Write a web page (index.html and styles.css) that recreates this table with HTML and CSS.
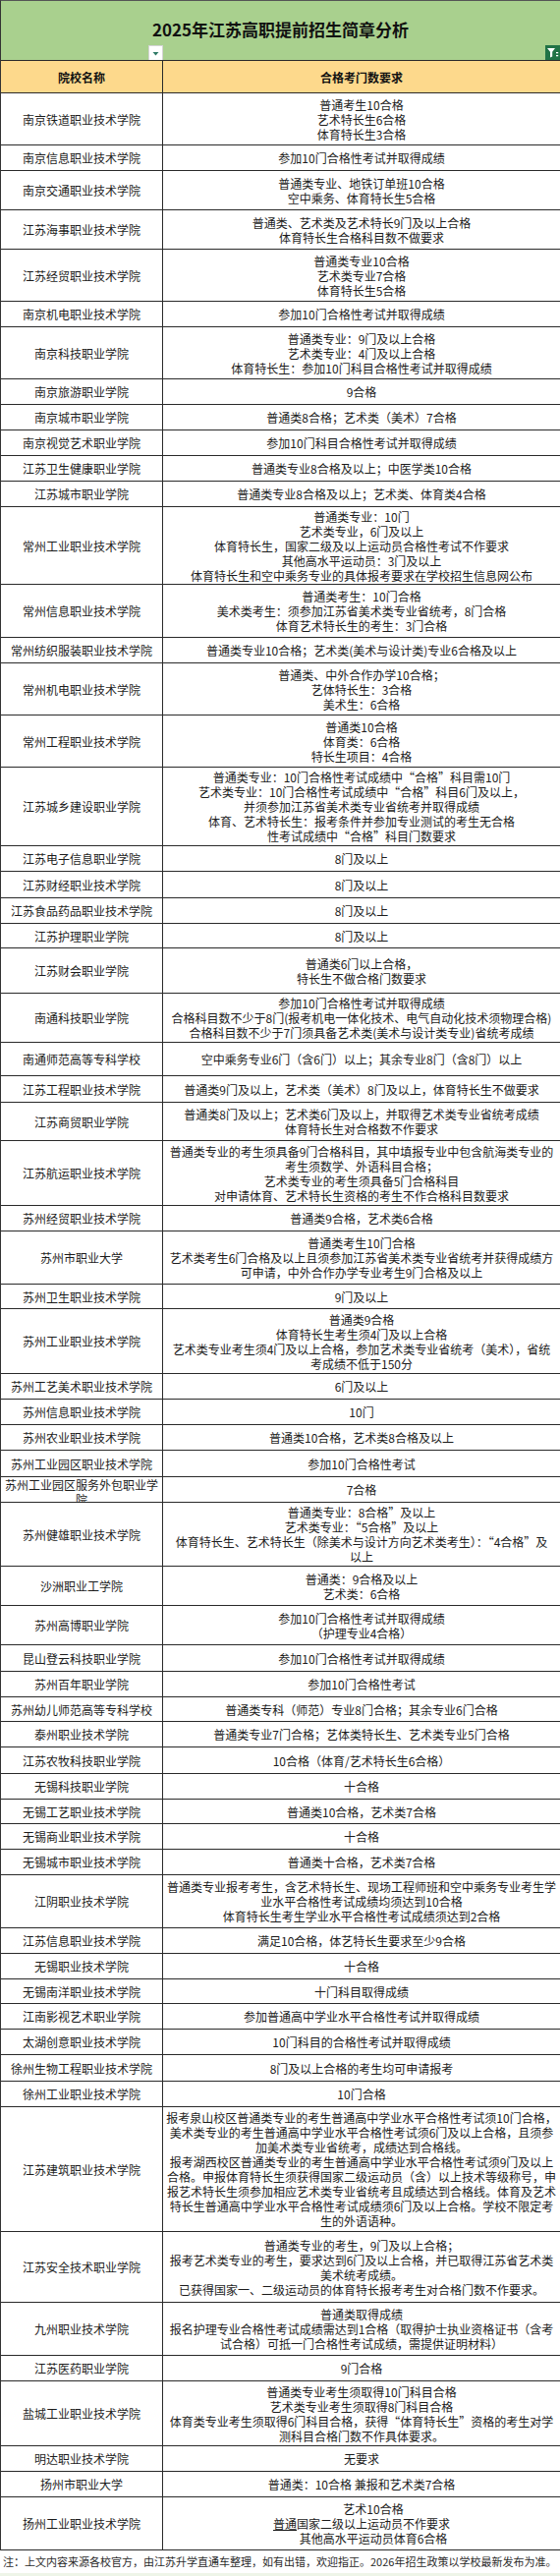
FILE: index.html
```html
<!DOCTYPE html>
<html lang="zh-CN">
<head>
<meta charset="utf-8">
<title>2025年江苏高职提前招生简章分析</title>
<link rel="stylesheet" href="styles.css">
</head>
<body>
<div class="sheet">
  <div class="title">
    <div class="title-text">2025年江苏高职提前招生简章分析</div>
    <div class="filters">
      <div class="fcol1"><span class="dd"><svg width="13" height="13" viewBox="0 0 13 13"><path d="M3.5 5 H9.5 L6.5 8.5 Z" fill="#2f7a66"/></svg></span></div>
      <div class="fcol2"><span class="ft"><svg width="15" height="15" viewBox="0 0 15 15"><path d="M2 3 H10 L7.2 6.8 V11.5 L5 12.5 V6.8 Z" fill="#fff"/><rect x="11" y="7" width="2.2" height="1.3" fill="#fff"/><rect x="11" y="10" width="2.2" height="1.3" fill="#fff"/></svg></span></div>
    </div>
  </div>
  <div class="row head h33"><div class="c1">院校名称</div><div class="c2">合格考门数要求</div></div>

  <div class="row h53"><div class="c1">南京铁道职业技术学院</div><div class="c2">普通考生10合格<br>艺术特长生6合格<br>体育特长生3合格</div></div>
  <div class="row h26"><div class="c1">南京信息职业技术学院</div><div class="c2">参加10门合格性考试并取得成绩</div></div>
  <div class="row h40"><div class="c1">南京交通职业技术学院</div><div class="c2">普通类专业、地铁订单班10合格<br>空中乘务、体育特长生5合格</div></div>
  <div class="row h40"><div class="c1">江苏海事职业技术学院</div><div class="c2">普通类、艺术类及艺术特长9门及以上合格<br>体育特长生合格科目数不做要求</div></div>
  <div class="row h53"><div class="c1">江苏经贸职业技术学院</div><div class="c2">普通类专业10合格<br>艺术类专业7合格<br>体育特长生5合格</div></div>
  <div class="row h26"><div class="c1">南京机电职业技术学院</div><div class="c2">参加10门合格性考试并取得成绩</div></div>
  <div class="row h53"><div class="c1">南京科技职业学院</div><div class="c2">普通类专业：9门及以上合格<br>艺术类专业：4门及以上合格<br>体育特长生：参加10门科目合格性考试并取得成绩</div></div>
  <div class="row h26"><div class="c1">南京旅游职业学院</div><div class="c2">9合格</div></div>
  <div class="row h26"><div class="c1">南京城市职业学院</div><div class="c2">普通类8合格；艺术类（美术）7合格</div></div>
  <div class="row h26"><div class="c1">南京视觉艺术职业学院</div><div class="c2">参加10门科目合格性考试并取得成绩</div></div>
  <div class="row h26"><div class="c1">江苏卫生健康职业学院</div><div class="c2">普通类专业8合格及以上；中医学类10合格</div></div>
  <div class="row h26"><div class="c1">江苏城市职业学院</div><div class="c2">普通类专业8合格及以上；艺术类、体育类4合格</div></div>
  <div class="row h79"><div class="c1">常州工业职业技术学院</div><div class="c2">普通类专业：10门<br>艺术类专业，6门及以上<br>体育特长生，国家二级及以上运动员合格性考试不作要求<br>其他高水平运动员：3门及以上<br>体育特长生和空中乘务专业的具体报考要求在学校招生信息网公布</div></div>
  <div class="row h54"><div class="c1">常州信息职业技术学院</div><div class="c2">普通类考生：10门合格<br>美术类考生：须参加江苏省美术类专业省统考，8门合格<br>体育艺术特长生的考生：3门合格</div></div>
  <div class="row h26"><div class="c1">常州纺织服装职业技术学院</div><div class="c2">普通类专业10合格；艺术类(美术与设计类)专业6合格及以上</div></div>
  <div class="row h53"><div class="c1">常州机电职业技术学院</div><div class="c2">普通类、中外合作办学10合格；<br>艺体特长生：3合格<br>美术生：6合格</div></div>
  <div class="row h53"><div class="c1">常州工程职业技术学院</div><div class="c2">普通类10合格<br>体育类：6合格<br>特长生项目：4合格</div></div>
  <div class="row h80"><div class="c1">江苏城乡建设职业学院</div><div class="c2">普通类专业：10门合格性考试成绩中“合格”科目需10门<br>艺术类专业：10门合格性考试成绩中“合格”科目6门及以上，<br>并须参加江苏省美术类专业省统考并取得成绩<br>体育、艺术特长生：报考条件并参加专业测试的考生无合格<br>性考试成绩中“合格”科目门数要求</div></div>
  <div class="row h26"><div class="c1">江苏电子信息职业学院</div><div class="c2">8门及以上</div></div>
  <div class="row h27"><div class="c1">江苏财经职业技术学院</div><div class="c2">8门及以上</div></div>
  <div class="row h26"><div class="c1">江苏食品药品职业技术学院</div><div class="c2">8门及以上</div></div>
  <div class="row h25"><div class="c1">江苏护理职业学院</div><div class="c2">8门及以上</div></div>
  <div class="row h46"><div class="c1">江苏财会职业学院</div><div class="c2">普通类6门以上合格，<br>特长生不做合格门数要求</div></div>
  <div class="row h50"><div class="c1">南通科技职业学院</div><div class="c2">参加10门合格性考试并取得成绩<br>合格科目数不少于8门(报考机电一体化技术、电气自动化技术须物理合格)<br>合格科目数不少于7门须具备艺术类(美术与设计类专业)省统考成绩</div></div>
  <div class="row h34"><div class="c1">南通师范高等专科学校</div><div class="c2">空中乘务专业6门（含6门）以上；其余专业8门（含8门）以上</div></div>
  <div class="row h27"><div class="c1">江苏工程职业技术学院</div><div class="c2">普通类9门及以上，艺术类（美术）8门及以上，体育特长生不做要求</div></div>
  <div class="row h39"><div class="c1">江苏商贸职业学院</div><div class="c2">普通类8门及以上；艺术类6门及以上，并取得艺术类专业省统考成绩<br>体育特长生对合格数不作要求</div></div>
  <div class="row h66"><div class="c1">江苏航运职业技术学院</div><div class="c2">普通类专业的考生须具备9门合格科目，其中填报专业中包含航海类专业的<br>考生须数学、外语科目合格；<br>艺术类专业的考生须具备5门合格科目<br>对申请体育、艺术特长生资格的考生不作合格科目数要求</div></div>
  <div class="row h26"><div class="c1">苏州经贸职业技术学院</div><div class="c2">普通类9合格，艺术类6合格</div></div>
  <div class="row h54"><div class="c1">苏州市职业大学</div><div class="c2">普通类考生10门合格<br>艺术类考生6门合格及以上且须参加江苏省美术类专业省统考并获得成绩方<br>可申请，中外合作办学专业考生9门合格及以上</div></div>
  <div class="row h25"><div class="c1">苏州卫生职业技术学院</div><div class="c2">9门及以上</div></div>
  <div class="row h66"><div class="c1">苏州工业职业技术学院</div><div class="c2">普通类9合格<br>体育特长生考生须4门及以上合格<br>艺术类专业考生须4门及以上合格，参加艺术类专业省统考（美术），省统<br>考成绩不低于150分</div></div>
  <div class="row h26"><div class="c1">苏州工艺美术职业技术学院</div><div class="c2">6门及以上</div></div>
  <div class="row h26"><div class="c1">苏州信息职业技术学院</div><div class="c2">10门</div></div>
  <div class="row h26"><div class="c1">苏州农业职业技术学院</div><div class="c2">普通类10合格，艺术类8合格及以上</div></div>
  <div class="row h27"><div class="c1">苏州工业园区职业技术学院</div><div class="c2">参加10门合格性考试</div></div>
  <div class="row h26"><div class="c1 clip">苏州工业园区服务外包职业学<br>院</div><div class="c2">7合格</div></div>
  <div class="row h65"><div class="c1">苏州健雄职业技术学院</div><div class="c2">普通类专业：8合格”及以上<br>艺术类专业：“5合格”及以上<br>体育特长生、艺术特长生（除美术与设计方向艺术类考生）：“4合格”及<br>以上</div></div>
  <div class="row h40"><div class="c1">沙洲职业工学院</div><div class="c2">普通类：9合格及以上<br>艺术类：6合格</div></div>
  <div class="row h40"><div class="c1">苏州高博职业学院</div><div class="c2">参加10门合格性考试并取得成绩<br>（护理专业4合格）</div></div>
  <div class="row h27"><div class="c1">昆山登云科技职业学院</div><div class="c2">参加10门合格性考试并取得成绩</div></div>
  <div class="row h26"><div class="c1">苏州百年职业学院</div><div class="c2">参加10门合格性考试</div></div>
  <div class="row h25"><div class="c1">苏州幼儿师范高等专科学校</div><div class="c2">普通类专科（师范）专业8门合格；其余专业6门合格</div></div>
  <div class="row h26"><div class="c1">泰州职业技术学院</div><div class="c2">普通类专业7门合格；艺体类特长生、艺术类专业5门合格</div></div>
  <div class="row h27"><div class="c1">江苏农牧科技职业学院</div><div class="c2">10合格（体育/艺术特长生6合格）</div></div>
  <div class="row h26"><div class="c1">无锡科技职业学院</div><div class="c2">十合格</div></div>
  <div class="row h25"><div class="c1">无锡工艺职业技术学院</div><div class="c2">普通类10合格，艺术类7合格</div></div>
  <div class="row h26"><div class="c1">无锡商业职业技术学院</div><div class="c2">十合格</div></div>
  <div class="row h26"><div class="c1">无锡城市职业技术学院</div><div class="c2">普通类十合格，艺术类7合格</div></div>
  <div class="row h54"><div class="c1">江阴职业技术学院</div><div class="c2">普通类专业报考考生，含艺术特长生、现场工程师班和空中乘务专业考生学<br>业水平合格性考试成绩均须达到10合格<br>体育特长生考生学业水平合格性考试成绩须达到2合格</div></div>
  <div class="row h26"><div class="c1">江苏信息职业技术学院</div><div class="c2">满足10合格，体艺特长生要求至少9合格</div></div>
  <div class="row h26"><div class="c1">无锡职业技术学院</div><div class="c2">十合格</div></div>
  <div class="row h25"><div class="c1">无锡南洋职业技术学院</div><div class="c2">十门科目取得成绩</div></div>
  <div class="row h26"><div class="c1">江南影视艺术职业学院</div><div class="c2">参加普通高中学业水平合格性考试并取得成绩</div></div>
  <div class="row h26"><div class="c1">太湖创意职业技术学院</div><div class="c2">10门科目的合格性考试并取得成绩</div></div>
  <div class="row h27"><div class="c1">徐州生物工程职业技术学院</div><div class="c2">8门及以上合格的考生均可申请报考</div></div>
  <div class="row h26"><div class="c1">徐州工业职业技术学院</div><div class="c2">10门合格</div></div>
  <div class="row h127"><div class="c1">江苏建筑职业技术学院</div><div class="c2">报考泉山校区普通类专业的考生普通高中学业水平合格性考试须10门合格，<br>美术类专业的考生普通高中学业水平合格性考试须6门及以上合格，且须参<br>加美术类专业省统考，成绩达到合格线。<br>报考湖西校区普通类专业的考生普通高中学业水平合格性考试须9门及以上<br>合格。申报体育特长生须获得国家二级运动员（含）以上技术等级称号，申<br>报艺术特长生须参加相应艺术类专业省统考且成绩达到合格线。体育及艺术<br>特长生普通高中学业水平合格性考试成绩须6门及以上合格。学校不限定考<br>生的外语语种。</div></div>
  <div class="row h72"><div class="c1">江苏安全技术职业学院</div><div class="c2">普通类专业的考生，9门及以上合格；<br>报考艺术类专业的考生，要求达到6门及以上合格，并已取得江苏省艺术类<br>美术统考成绩。<br>已获得国家一、二级运动员的体育特长报考考生对合格门数不作要求。</div></div>
  <div class="row h54"><div class="c1">九州职业技术学院</div><div class="c2">普通类取得成绩<br>报名护理专业合格性考试成绩需达到1合格（取得护士执业资格证书（含考<br>试合格）可抵一门合格性考试成绩，需提供证明材料）</div></div>
  <div class="row h26"><div class="c1">江苏医药职业学院</div><div class="c2">9门合格</div></div>
  <div class="row h66"><div class="c1">盐城工业职业技术学院</div><div class="c2">普通类专业考生须取得10门科目合格<br>艺术类专业考生须取得8门科目合格<br>体育类专业考生须取得6门科目合格，获得“体育特长生”资格的考生对学<br>测科目合格门数不作具体要求。</div></div>
  <div class="row h26"><div class="c1">明达职业技术学院</div><div class="c2">无要求</div></div>
  <div class="row h26"><div class="c1">扬州市职业大学</div><div class="c2">普通类：10合格 兼报和艺术类7合格</div></div>
  <div class="row h54"><div class="c1">扬州工业职业技术学院</div><div class="c2"><u>普通</u> 艺术10合格<br>国家二级以上运动员不作要求<br>其他高水平运动员体育6合格</div></div>
</div>
<p class="note">注：上文内容来源各校官方，由江苏升学直通车整理，如有出错，欢迎指正。2026年招生政策以学校最新发布为准。</p>
<div class="strip"></div>
</body>
</html>
```

FILE: styles.css
```css
html, body {
  margin: 0;
  padding: 0;
  background: #fff;
}
body {
  width: 570px;
  font-family: "Noto Sans CJK SC", "Liberation Sans", sans-serif;
  color: #1c1c1c;
  font-size: 12px;
  line-height: 15px;
}
.sheet {
  border-top: 1px solid #555;
  border-left: 1px solid #333;
}
.title {
  height: 61px;
  box-sizing: border-box;
  background: #a9d08e;
  border-bottom: 1px solid #2a2a2a;
  display: flex;
  flex-direction: column;
}
.title-text {
  flex: 1;
  display: flex;
  align-items: center;
  justify-content: center;
  font-size: 17px;
  font-weight: 700;
  color: #111;
  padding-top: 18px;
  padding-bottom: 6px;
  line-height: 20px;
}
.filters {
  display: flex;
  height: 15px;
}
.fcol1 {
  width: 165px;
  display: flex;
  justify-content: flex-end;
}
.fcol2 {
  flex: 1;
  display: flex;
  justify-content: flex-end;
}
.dd {
  width: 15px;
  height: 15px;
  box-sizing: border-box;
  background: #fff;
  border: 1px solid #d4d4d4;
  border-bottom: none;
  display: flex;
  align-items: center;
  justify-content: center;
}
.ft {
  width: 15px;
  height: 15px;
  background: #217346;
  display: flex;
  align-items: center;
  justify-content: center;
}
.row {
  display: flex;
  box-sizing: border-box;
  border-bottom: 1px solid #2a2a2a;
}
.c1 {
  width: 165px;
  flex: none;
  box-sizing: border-box;
  border-right: 1px solid #2a2a2a;
  display: flex;
  align-items: center;
  justify-content: center;
  text-align: center;
  overflow: hidden;
}
.c2 {
  flex: 1;
  display: flex;
  align-items: center;
  justify-content: center;
  text-align: center;
  white-space: nowrap;
  overflow: hidden;
  padding: 0 2px;
}
.c1.clip {
  padding-top: 4px;
}
.head {
  background: #fdd98c;
  font-weight: 700;
  color: #111;
}
.h25 { height: 25px; }
.h26 { height: 26px; }
.h27 { height: 27px; }
.h33 { height: 33px; }
.h34 { height: 34px; }
.h39 { height: 39px; }
.h40 { height: 40px; }
.h46 { height: 46px; }
.h50 { height: 50px; }
.h53 { height: 53px; }
.h54 { height: 54px; }
.h65 { height: 65px; }
.h66 { height: 66px; }
.h72 { height: 72px; }
.h79 { height: 79px; }
.h80 { height: 80px; }
.h127 { height: 127px; }
.note {
  margin: 0;
  height: 23px;
  padding: 0 0 0 3px;
  font-size: 11px;
  line-height: 23px;
  color: #2a2a2a;
  white-space: nowrap;
  overflow: hidden;
}
.strip {
  height: 3px;
  background: #eef5e8;
}
```
